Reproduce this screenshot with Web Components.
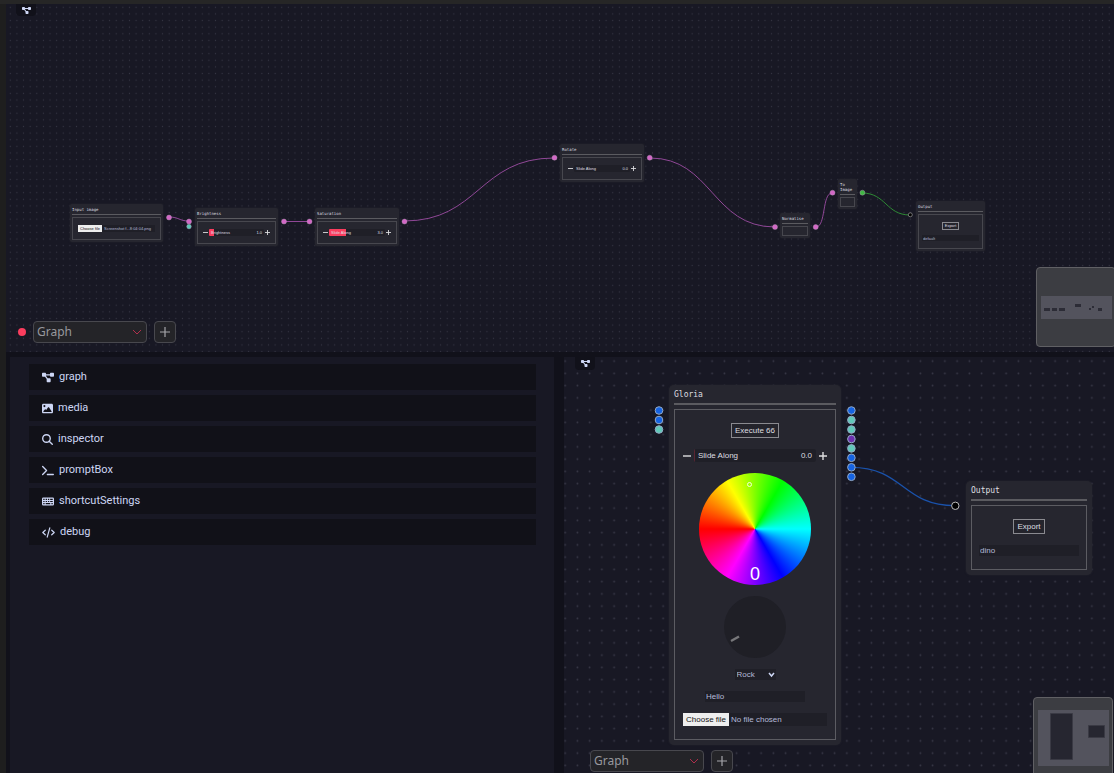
<!DOCTYPE html>
<html lang="en">
<head>
<meta charset="utf-8">
<title>Graph editor</title>
<style>
  html, body { margin: 0; height: 100%; }
  body { background: #262626; font-family: Roboto, sans-serif; overflow: hidden; }
</style>
</head>
<body>
<editor-shell>
  <graph-pane slot="top" far recording>
    <svg slot="wires" width="100%" height="100%">
      <g transform="translate(-6 -4)">
        <g fill="none" stroke="#8f4796">
          <path d="M169 217C179 217 179 221 189 221"/>
          <path d="M284 221.500H310"/>
          <path d="M404 221C479 221 479 158 554 158"/>
          <path d="M650 158C712 158 712 227 775 227"/>
          <path d="M816 227C826 227 822 193 832 193"/>
          <path d="M862 193C886 193 886 215 910 215" stroke="#2e8a35"/>
        </g>
        <g fill="#d267c6" stroke="#b79ab8" stroke-width=".4">
          <circle cx="169" cy="217.5" r="2.5"/><circle cx="189" cy="221.5" r="2.5"/>
          <circle cx="284" cy="221.5" r="2.5"/><circle cx="309.5" cy="221.5" r="2.5"/>
          <circle cx="404.5" cy="221.5" r="2.5"/><circle cx="554.5" cy="157.7" r="2.5"/>
          <circle cx="649.7" cy="157.7" r="2.5"/><circle cx="775" cy="227" r="2.5"/>
          <circle cx="815.7" cy="227" r="2.5"/><circle cx="832.5" cy="192.7" r="2.5"/>
          <circle cx="189" cy="226.6" r="2.3" fill="#5fc9b8"/>
          <circle cx="862.4" cy="192.7" r="2.5" fill="#41b845"/>
          <circle cx="910.3" cy="214.8" r="2" fill="#000" stroke="#999" stroke-width=".7"/>
        </g>
      </g>
    </svg>
    <graph-node label="Input image" x="64" y="200" w="93"><node-file name="Screenshot f...8:04:04.png"></node-file></graph-node>
    <graph-node label="Brightness" x="189" y="204" w="83"><node-slider label="Brightness" value="1.0" fill="10"></node-slider></graph-node>
    <graph-node label="Saturation" x="309" y="204" w="84"><node-slider label="Slide Along" value="3.0" fill="30"></node-slider></graph-node>
    <graph-node label="Rotate" x="554" y="140" w="84"><node-slider label="Slide Along" value="0.0" fill="0"></node-slider></graph-node>
    <graph-node label="Normalise" x="774" y="209" w="30" empty></graph-node>
    <graph-node label="To Image" x="832" y="175" w="19" empty></graph-node>
    <graph-node label="Output" x="910" y="197" w="69"><node-button label="Export"></node-button><node-field value="default"></node-field></graph-node>
    <mini-map slot="map">
      <svg width="78" height="78" viewBox="0 0 78 78">
        <path fill="#53535d" d="M4 28h71v23H4z"/>
        <g fill="#2c2c36"><path d="M7 40h6v3H7zM15 40h5v3h-5zM22 40h6v3h-6zM38 36h6v3h-6zM52 40h2v2h-2zM55 38h2v2h-2zM61 40h4v3h-4z"/></g>
      </svg>
    </mini-map>
  </graph-pane>

  <pane-menu slot="left">
    <menu-row icon="graph">graph</menu-row>
    <menu-row icon="media">media</menu-row>
    <menu-row icon="inspector">inspector</menu-row>
    <menu-row icon="prompt">promptBox</menu-row>
    <menu-row icon="keyboard">shortcutSettings</menu-row>
    <menu-row icon="debug">debug</menu-row>
  </pane-menu>

  <graph-pane slot="right">
    <svg slot="wires" width="100%" height="100%">
      <g transform="translate(-564 -357)">
        <path fill="none" stroke="#1a52ab" stroke-width="1.3" d="M851 467.3C904 467.3 902 505.7 955 505.7"/>
        <g fill="#1563e2" stroke="#93a9c6">
          <circle cx="659" cy="410.5" r="3.8"/><circle cx="659" cy="420" r="3.8"/>
          <circle cx="659" cy="429.5" r="3.8" fill="#62c9b9"/>
          <circle cx="851.4" cy="410.5" r="3.8"/>
          <circle cx="851.4" cy="420" r="3.8" fill="#62c9b9"/>
          <circle cx="851.4" cy="429.5" r="3.8" fill="#62c9b9"/>
          <circle cx="851.4" cy="439" r="3.8" fill="#6d30ae"/>
          <circle cx="851.4" cy="448.4" r="3.8" fill="#62c9b9"/>
          <circle cx="851.4" cy="457.8" r="3.8"/><circle cx="851.4" cy="467.3" r="3.8"/>
          <circle cx="851.4" cy="476.8" r="3.8"/>
          <circle cx="955.3" cy="505.8" r="3.7" fill="#000" stroke="#bbb"/>
        </g>
      </g>
    </svg>
    <graph-node label="Gloria" x="105" y="28" w="172">
      <node-button label="Execute 66"></node-button>
      <node-slider label="Slide Along" value="0.0" fill="1"></node-slider>
      <color-wheel></color-wheel>
      <turn-knob></turn-knob>
      <node-select value="Rock"></node-select>
      <node-field value="Hello"></node-field>
      <node-file name="No file chosen"></node-file>
    </graph-node>
    <graph-node label="Output" x="402" y="124" w="126"><node-button label="Export"></node-button><node-field value="dino"></node-field></graph-node>
    <mini-map slot="map">
      <svg width="78" height="78" viewBox="0 0 78 78">
        <path fill="#53535d" d="M4 12h71v56H4z"/>
        <path fill="#262630" stroke="#3a3a44" d="M16.500 15.500h22v46h-22zM54.500 27.500h16v12h-16z"/>
      </svg>
    </mini-map>
  </graph-pane>
</editor-shell>

<script>
const ICONS = {
  graph: [12, '0 0 576 512', '<path fill="currentColor" d="M0 80C0 53.500 21.500 32 48 32l96 0c26.500 0 48 21.500 48 48l0 16 192 0 0-16c0-26.500 21.500-48 48-48l96 0c26.500 0 48 21.500 48 48l0 96c0 26.500-21.500 48-48 48l-96 0c-26.500 0-48-21.500-48-48l0-16-192 0 0 16c0 1.700-.1 3.400-.3 5L272 288l96 0c26.500 0 48 21.500 48 48l0 96c0 26.500-21.500 48-48 48l-96 0c-26.500 0-48-21.500-48-48l0-96c0-1.700 .1-3.400 .3-5L144 224l-96 0c-26.500 0-48-21.500-48-48L0 80z"/>'],
  media: [11, '0 0 512 512', '<path fill="currentColor" d="M0 96C0 60.700 28.700 32 64 32l384 0c35.300 0 64 28.700 64 64l0 320c0 35.300-28.700 64-64 64L64 480c-35.300 0-64-28.700-64-64L0 96zM323.800 202.500c-4.500-6.600-11.900-10.500-19.800-10.500s-15.400 3.900-19.800 10.500l-87 127.600L170.700 297c-4.600-5.700-11.500-9-18.700-9s-14.200 3.300-18.700 9l-64 80c-5.800 7.200-6.900 17.100-2.900 25.400s12.400 13.600 21.600 13.600l96 0 32 0 208 0c8.900 0 17.100-4.900 21.200-12.800s3.600-17.400-1.400-24.700l-120-176zM112 192a48 48 0 1 0 0-96 48 48 0 1 0 0 96z" fill-rule="evenodd"/>'],
  inspector: [11, '0 0 512 512', '<g fill="none" stroke="currentColor" stroke-width="64" stroke-linecap="round"><circle cx="208" cy="208" r="176"/><path d="M335 335 478 478"/></g>'],
  prompt: [12, '0 0 576 512', '<path fill="none" stroke="currentColor" stroke-width="62" stroke-linecap="round" stroke-linejoin="round" d="M32 64 218 256 32 448M256 448H544"/>'],
  keyboard: [12, '0 0 576 512', '<path fill="currentColor" fill-rule="evenodd" d="M64 64H512a64 64 0 0 1 64 64V384a64 64 0 0 1-64 64H64a64 64 0 0 1-64-64V128a64 64 0 0 1 64-64zM60 125v54h64v-54zM176 125v54h64v-54zM284 125v54h64v-54zM392 125v54h124v-54zM60 229v54h64v-54zM176 229v54h64v-54zM284 229v54h64v-54zM392 229v54h124v-54zM60 333v54h64v-54zM176 333v54h220v-54zM452 333v54h64v-54z"/>'],
  debug: [13, '0 0 640 512', '<path fill="none" stroke="currentColor" stroke-width="60" stroke-linecap="round" stroke-linejoin="round" d="M384 32 256 480M160 144 40 256 160 368M480 144 600 256 480 368"/>']
};
const icon = (name, width) => {
  const [w, box, body] = ICONS[name];
  return `<svg width="${width || w}" height="11" viewBox="${box}" aria-hidden="true">${body}</svg>`;
};
const define = (tag, render) => customElements.define(tag, class extends HTMLElement {
  connectedCallback() {
    if (this.shadowRoot) return;
    this.attachShadow({ mode: 'open' }).innerHTML = render(this);
  }
});
const attr = (el, name) => el.getAttribute(name) || '';

define('editor-shell', () => `<style>
  :host { display: block; height: 100vh; box-sizing: border-box; padding: 4px 0 0 6px; background: linear-gradient(#262626 4px, #1e1e1e 4px); }
  .grid { height: 100%; display: grid; background: #11111a; grid-template-rows: minmax(0, 348fr) minmax(0, 416fr); gap: 5px; }
  .bottom { display: grid; grid-template-columns: minmax(0, 544fr) minmax(0, 550fr); gap: 10px; padding-left: 4px; }
  </style><main class="grid"><slot name="top"></slot><div class="bottom"><slot name="left"></slot><slot name="right"></slot></div></main>`);

define('graph-pane', el => {
  const far = el.hasAttribute('far');
  const scale = far ? 0.331 : 0.6125;
  return `<style>
  :host { display: block; position: relative; overflow: hidden; background: #181824;
    --pad: 5px; --title: 8px; --title-line: 9px; --title-top: 0px; --title-gap: 4px; --rule: 2px; --line-gap: 4px;
    --body-pad: 13px; --gap: 11px; --empty: 20px; --radius: 5px; --line: #5c5c62;
    --text: 8px; --button: 15px; --button-pad: 3px; --row: 13px; --field: 11px; --side: 8px; --field-side: 5px; --step: 8px; --step-gap: 3px; --inset: 4px; --round: 2px; }
  :host([far]) { --pad: 2px; --title: 4px; --title-line: 5px; --title-top: 1px; --title-gap: 2px; --rule: 1px; --line-gap: 2px;
    --body-pad: 7px; --gap: 5px; --empty: 8px; --radius: 2px; --line: #47474e;
    --text: 4px; --button: 8px; --button-pad: 2px; --row: 7px; --field: 6px; --side: 5px; --field-side: 3px; --step: 5px; --step-gap: 1px; --inset: 2px; --round: 1px; }
  .dots, ::slotted(svg) { position: absolute; inset: 0; width: 100%; height: 100%; }
  .tab { position: absolute; left: 11px; top: 0; width: 20px; height: 13px; display: flex; justify-content: center; align-items: center; background: #11111a; color: #cdd6f4; border-radius: 0 0 4px 4px; }
  :host([far]) .tab { left: 10px; height: 12px; }
  .bar { position: absolute; left: 26px; bottom: 1px; display: flex; align-items: center; gap: 7px; }
  :host([far]) .bar { left: 12px; bottom: 9px; }
  .rec { width: 8px; height: 8px; border-radius: 50%; background: #fa3d5e; }
  .pick { position: relative; display: flex; }
  select, button { box-sizing: border-box; height: 22px; border: 1px solid #48484e; border-radius: 4px; background: #242428; color: #98989e; }
  select { appearance: none; width: 114px; padding: 0 3px; font: 12px/20px "Noto Sans", sans-serif; }
  .pick svg { position: absolute; right: 5px; top: 7px; pointer-events: none; }
  button { width: 22px; padding: 0; display: grid; place-items: center; }
  .map { position: absolute; right: 1px; bottom: -4px; }
  :host([far]) .map { right: -2px; bottom: 5px; }
  </style>
  <svg class="dots" aria-hidden="true"><defs><pattern id="d" width="20" height="20" patternUnits="userSpaceOnUse" patternTransform="translate(${far ? '1 0' : '-5 -2'}) scale(${scale})"><circle cx="10" cy="10" r="${far ? 1.8 : 1.4}" fill="${far ? '#363644' : '#3a3a49'}"/></pattern></defs><rect width="100%" height="100%" fill="url(#d)"/></svg>
  <slot name="wires"></slot><slot></slot>
  <div class="tab">${icon('graph', 9)}</div>
  <div class="bar">${el.hasAttribute('recording') ? '<span class="rec"></span>' : ''}
    <div class="pick"><select aria-label="Pane type"><option>Graph</option></select>
      <svg width="10" height="8" viewBox="0 0 10 8"><path d="M1 2 5 6 9 2" fill="none" stroke="#b02f4c"/></svg></div>
    <button aria-label="Add"><svg width="12" height="12" viewBox="0 0 12 12"><path d="M6 1V11M1 6H11" stroke="#a5a5aa" stroke-width="1.2"/></svg></button></div>
  <div class="map"><slot name="map"></slot></div>`;
});

define('mini-map', () => `<style>
  :host { display: block; border: 1px solid #606064; border-radius: 4px; background: #3c3d42; overflow: hidden; }
  ::slotted(svg) { display: block; }
  </style><slot></slot>`);

define('graph-node', el => `<style>
  :host { position: absolute; left: ${attr(el, 'x')}px; top: ${attr(el, 'y')}px; width: ${attr(el, 'w')}px; box-sizing: border-box; padding: var(--pad);
    border-radius: var(--radius); background: #26262f; box-shadow: 0 0 2px #26262f; }
  h2 { margin: 0; padding: var(--title-top) 0 var(--title-gap); border-bottom: var(--rule) solid #5b5b60; font: var(--title)/var(--title-line) "DejaVu Sans Mono", monospace; color: #dedee0; }
  .body { display: flex; flex-direction: column; align-items: center; gap: var(--gap); margin-top: var(--line-gap); padding: var(--body-pad) 0; border: 1px solid var(--line); font-family: "Liberation Sans", sans-serif; }
  :host([empty]) .body { padding: 0; height: var(--empty); }
  </style><h2>${attr(el, 'label')}</h2><div class="body"><slot></slot></div>`);

define('node-button', el => `<style>
  :host { display: flex; }
  button { box-sizing: border-box; height: var(--button); padding: 0 var(--button-pad); border: 1px solid #8a8a90; background: #24242c; color: #dedee0; font: var(--text)/1 "Liberation Sans", sans-serif; }
  </style><button>${attr(el, 'label')}</button>`);

define('node-slider', el => `<style>
  :host { display: flex; align-self: stretch; align-items: center; gap: var(--step-gap); padding: 0 var(--side); height: var(--row); color: #dedee0; font-size: var(--text); }
  button { width: var(--step); height: var(--step); flex: none; padding: 0; border: 0; background: none; color: inherit; display: grid; }
  label { position: relative; flex: 1; height: 100%; min-width: 0; display: flex; align-items: center; justify-content: space-between; padding: 0 var(--inset); border-radius: var(--round); overflow: hidden;
    background: linear-gradient(90deg, ${+attr(el, 'fill') === 1 ? '#5a2432' : '#fa3d5e'} ${attr(el, 'fill')}%, #1f1f27 ${attr(el, 'fill')}%); white-space: nowrap; }
  input { position: absolute; inset: 0; width: 100%; height: 100%; margin: 0; opacity: 0; }
  </style><button aria-label="Decrease"><svg width="100%" height="100%" viewBox="0 0 8 8"><path d="M0 4H8" stroke="currentColor" stroke-width="1.4"/></svg></button>
  <label><span>${attr(el, 'label')}</span><span>${attr(el, 'value')}</span><input type="range" value="${attr(el, 'fill')}"></label>
  <button aria-label="Increase"><svg width="100%" height="100%" viewBox="0 0 8 8"><path d="M0 4H8M4 0V8" stroke="currentColor" stroke-width="1.4"/></svg></button>`);

define('node-field', el => `<style>
  :host { display: flex; align-self: stretch; justify-content: center; padding: 0 var(--field-side); }
  input { box-sizing: border-box; width: 100%; max-width: 100px; height: var(--field); padding: 0 1px; border: 0; background: #1f1f27; color: #b4bad8; font: var(--text)/1 "Liberation Sans", sans-serif; }
  </style><input type="text" aria-label="Name" value="${attr(el, 'value')}">`);

define('node-file', el => `<style>
  :host { display: flex; align-self: stretch; padding: 0 var(--side); }
  .row { position: relative; flex: 1; min-width: 0; display: flex; align-items: center; gap: 2px; height: var(--row); background: #1f1f27; color: #b4bad8; font-size: var(--text); white-space: nowrap; }
  label { height: 100%; display: flex; align-items: center; padding: 0 var(--button-pad); background: #eee; color: #111; }
  input { position: absolute; inset: 0; width: 100%; opacity: 0; }
  </style><div class="row"><label for="f">Choose file</label><span>${attr(el, 'name')}</span><input id="f" type="file"></div>`);

define('node-select', el => `<style>
  :host { position: relative; display: flex; }
  select { appearance: none; width: 41px; height: 11px; padding: 0 2px; border: 0; background: #1f1f27; color: #b4bad8; font: 8px/11px "Liberation Sans", sans-serif; }
  svg { position: absolute; right: 1px; top: 3px; pointer-events: none; }
  </style><select aria-label="Genre"><option>${attr(el, 'value')}</option></select>
  <svg width="7" height="6" viewBox="0 0 7 6"><path d="M1 1 3.500 4 6 1" fill="none" stroke="#cdd6f4" stroke-width="1.500"/></svg>`);

define('color-wheel', () => `<style>
  :host { position: relative; display: flex; align-items: flex-end; justify-content: center; width: 112px; height: 112px; border-radius: 50%;
    background: conic-gradient(from 270deg, #f00, #ff0, #0f0, #0ff, #00f, #f0f, #f00); color: #fff; font-size: 18px; line-height: 22px; }
  i { position: absolute; left: 48px; top: 9px; width: 3px; height: 3px; border: 1px solid #f2ffd8; border-radius: 50%; }
  </style><i></i><span>0</span>`);

define('turn-knob', () => `<style>
  :host { display: block; width: 62px; height: 62px; border-radius: 50%; background: #1f1f26; }
  svg { display: block; }
  </style><svg width="62" height="62" viewBox="0 0 62 62"><path d="M7 45 15 40.500" stroke="#77777a" stroke-width="2.400"/></svg>`);

define('pane-menu', () => `<style>
  :host { display: flex; flex-direction: column; gap: 5px; padding: 7px 18px 0 19px; background: #181824; }
  </style><slot></slot>`);

define('menu-row', el => `<style>
  :host { display: block; }
  button { width: 100%; height: 26px; display: flex; align-items: center; gap: 5px; padding: 0 13px; border: 0; background: #111118; color: #cdd6f4; font: 11px/16px Roboto, sans-serif; text-align: left; }
  </style><button>${icon(attr(el, 'icon'))}<span><slot></slot></span></button>`);
</script>
</body>
</html>
